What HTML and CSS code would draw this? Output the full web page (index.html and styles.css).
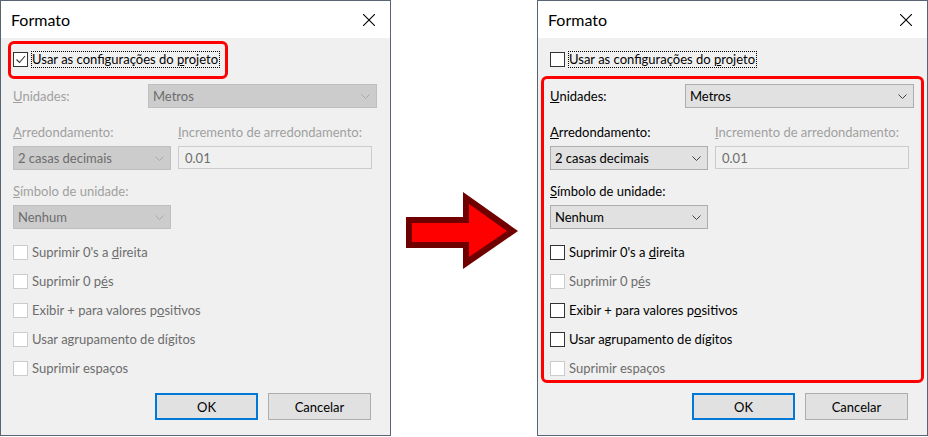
FILE: index.html
```html
<!DOCTYPE html>
<html lang="pt">
<head>
    <meta charset="UTF-8">
    <title>Formato</title>
    <link rel="stylesheet" href="styles.css">
</head>
<body>
    <div class="screen">

        <!-- before: project settings on, fields locked -->
        <div class="dialog">
            <div class="titlebar">
                <span class="title">Formato</span>
                <svg class="close" width="12" height="12" viewBox="0 0 12 12"><path d="M0 0L12 12M12 0L0 12" stroke="#000" stroke-width="1.1"/></svg>
            </div>
            <div class="mark marked">
                <div class="check">
                    <span class="box"><svg width="13" height="13" viewBox="0 0 13 13"><polyline points="2.5,6.5 5.5,9.5 11,3" fill="none" stroke="#333" stroke-width="1.1"/></svg></span>
                    <span class="focus">Usar as configurações do <u>p</u>rojeto</span>
                </div>
            </div>
            <div class="group">
                <div class="row">
                    <span class="label off units"><u>U</u>nidades:</span>
                    <div class="combo off wide">Metros<svg class="chev" width="9" height="5" viewBox="0 0 9 5"><polyline points="0.5,0.5 4.5,4.5 8.5,0.5"/></svg></div>
                </div>
                <div class="cols">
                    <div class="col narrow">
                        <div class="label off"><u>A</u>rredondamento:</div>
                        <div class="combo off">2 casas decimais<svg class="chev" width="9" height="5" viewBox="0 0 9 5"><polyline points="0.5,0.5 4.5,4.5 8.5,0.5"/></svg></div>
                    </div>
                    <div class="col">
                        <div class="label off"><u>I</u>ncremento de arredondamento:</div>
                        <div class="textbox off">0.01</div>
                    </div>
                </div>
                <div class="col narrow symbol">
                    <div class="label off"><u>S</u>ímbolo de unidade:</div>
                    <div class="combo off">Nenhum<svg class="chev" width="9" height="5" viewBox="0 0 9 5"><polyline points="0.5,0.5 4.5,4.5 8.5,0.5"/></svg></div>
                </div>
                <div class="checks">
                    <div class="check off"><span class="box"></span><span>Suprimir 0's a <u>d</u>ireita</span></div>
                    <div class="check off"><span class="box"></span><span>Suprimir 0 p<u>é</u>s</span></div>
                    <div class="check off"><span class="box"></span><span>Exibir + para valores p<u>o</u>sitivos</span></div>
                    <div class="check off"><span class="box"></span><span>Usar agrupamento de dígitos</span></div>
                    <div class="check off"><span class="box"></span><span>Suprimir espaços</span></div>
                </div>
            </div>
            <div class="buttons">
                <button class="btn default">OK</button>
                <button class="btn">Cancelar</button>
            </div>
        </div>

        <div class="arrow">
            <svg width="146" height="437" viewBox="391 0 146 437">
                <polygon points="406,217 463,217 463,192 518,231 463,269 463,248 406,248" fill="#700000"/>
                <polygon points="412,223 469,223 469,204 507,231 469,257 469,242 412,242" fill="#ff0000"/>
            </svg>
        </div>

        <!-- after: project settings off, fields editable -->
        <div class="dialog">
            <div class="titlebar">
                <span class="title">Formato</span>
                <svg class="close" width="12" height="12" viewBox="0 0 12 12"><path d="M0 0L12 12M12 0L0 12" stroke="#000" stroke-width="1.1"/></svg>
            </div>
            <div class="mark">
                <div class="check">
                    <span class="box"></span>
                    <span class="focus">Usar as configurações do <u>p</u>rojeto</span>
                </div>
            </div>
            <div class="group marked">
                <div class="row">
                    <span class="label units"><u>U</u>nidades:</span>
                    <div class="combo wide">Metros<svg class="chev" width="9" height="5" viewBox="0 0 9 5"><polyline points="0.5,0.5 4.5,4.5 8.5,0.5"/></svg></div>
                </div>
                <div class="cols">
                    <div class="col narrow">
                        <div class="label"><u>A</u>rredondamento:</div>
                        <div class="combo">2 casas decimais<svg class="chev" width="9" height="5" viewBox="0 0 9 5"><polyline points="0.5,0.5 4.5,4.5 8.5,0.5"/></svg></div>
                    </div>
                    <div class="col">
                        <div class="label off"><u>I</u>ncremento de arredondamento:</div>
                        <div class="textbox off">0.01</div>
                    </div>
                </div>
                <div class="col narrow symbol">
                    <div class="label"><u>S</u>ímbolo de unidade:</div>
                    <div class="combo">Nenhum<svg class="chev" width="9" height="5" viewBox="0 0 9 5"><polyline points="0.5,0.5 4.5,4.5 8.5,0.5"/></svg></div>
                </div>
                <div class="checks">
                    <div class="check"><span class="box"></span><span>Suprimir 0's a <u>d</u>ireita</span></div>
                    <div class="check off"><span class="box"></span><span>Suprimir 0 p<u>é</u>s</span></div>
                    <div class="check"><span class="box"></span><span>Exibir + para valores p<u>o</u>sitivos</span></div>
                    <div class="check"><span class="box"></span><span>Usar agrupamento de dígitos</span></div>
                    <div class="check off"><span class="box"></span><span>Suprimir espaços</span></div>
                </div>
            </div>
            <div class="buttons">
                <button class="btn default">OK</button>
                <button class="btn">Cancelar</button>
            </div>
        </div>

    </div>
</body>
</html>
```

FILE: styles.css
```css
body {
    margin: 0;
    background: #fff;
    font-family: Lato, "Noto Sans", sans-serif;
    font-size: 13px;
    color: #000;
}

.screen {
    display: flex;
    width: 928px;
    height: 437px;
}

.dialog {
    box-sizing: border-box;
    width: 391px;
    height: 436px;
    border: 1px solid #596573;
    background: #f0f0f0;
    display: flex;
    flex-direction: column;
}

.titlebar {
    height: 37px;
    background: #fff;
    display: flex;
    align-items: center;
    justify-content: space-between;
    padding: 0 15px 0 10px;
}

.title {
    font-size: 16px;
}

.arrow {
    width: 146px;
    height: 437px;
}

.arrow svg {
    display: block;
}

/* red annotation frames; transparent when not marked */
.mark, .group {
    border: 3px solid transparent;
    border-radius: 6px;
}

.marked {
    border-color: #ff0000;
}

.mark {
    align-self: flex-start;
    margin: 3px 0 0 7px;
    padding: 7px 5px 8px 2px;
}

.group {
    margin: -3px 3px 0 3px;
    padding: 5px 6px 3px 6px;
}

.row {
    display: flex;
    align-items: center;
    height: 24px;
}

.label {
    line-height: 17px;
    white-space: nowrap;
}

.label.units {
    width: 135px;
}

.label.off {
    color: #a0a0a0;
}

.cols {
    display: flex;
    gap: 7px;
    margin-top: 16px;
}

.col {
    display: flex;
    flex-direction: column;
    gap: 5px;
}

.col.narrow {
    width: 158px;
}

.col.symbol {
    margin-top: 13px;
}

.combo {
    box-sizing: border-box;
    height: 24px;
    border: 1px solid #adadad;
    background: #e1e1e1;
    display: flex;
    align-items: center;
    justify-content: space-between;
    padding: 0 6px 0 4px;
}

.combo.wide {
    width: 229px;
}

.chev polyline {
    fill: none;
    stroke: #404040;
    stroke-width: 1;
}

.combo.off {
    background: #cccccc;
    border-color: #bfbfbf;
    color: #6d6d6d;
}

.combo.off .chev polyline {
    stroke: #a8a8a8;
}

.textbox {
    box-sizing: border-box;
    width: 194px;
    height: 23px;
    border: 1px solid #7a7a7a;
    background: #fff;
    display: flex;
    align-items: center;
    padding: 0 6px;
}

.textbox.off {
    border-color: #cccccc;
    background: #f0f0f0;
    color: #6d6d6d;
}

.checks {
    display: flex;
    flex-direction: column;
    gap: 12px;
    margin-top: 15px;
}

.check {
    display: flex;
    align-items: center;
    gap: 4px;
    line-height: 17px;
    white-space: nowrap;
}

.box {
    box-sizing: border-box;
    width: 15px;
    height: 15px;
    border: 1px solid #333;
    background: #fff;
    display: flex;
    flex: none;
}

.check.off {
    color: #6d6d6d;
}

.check.off .box {
    border-color: #cccccc;
}

.mark .check {
    gap: 3px;
}

.focus {
    border: 1px dotted #000;
    padding: 0 1px 0 0;
    line-height: 15px;
}

.buttons {
    display: flex;
    justify-content: flex-end;
    gap: 10px;
    margin-top: 10px;
    padding-right: 19px;
}

.btn {
    box-sizing: border-box;
    width: 103px;
    height: 27px;
    border: 1px solid #adadad;
    background: #e1e1e1;
    font-family: inherit;
    font-size: 13px;
    color: #000;
    padding: 0;
}

.btn.default {
    border: 2px solid #0078d7;
}
```
